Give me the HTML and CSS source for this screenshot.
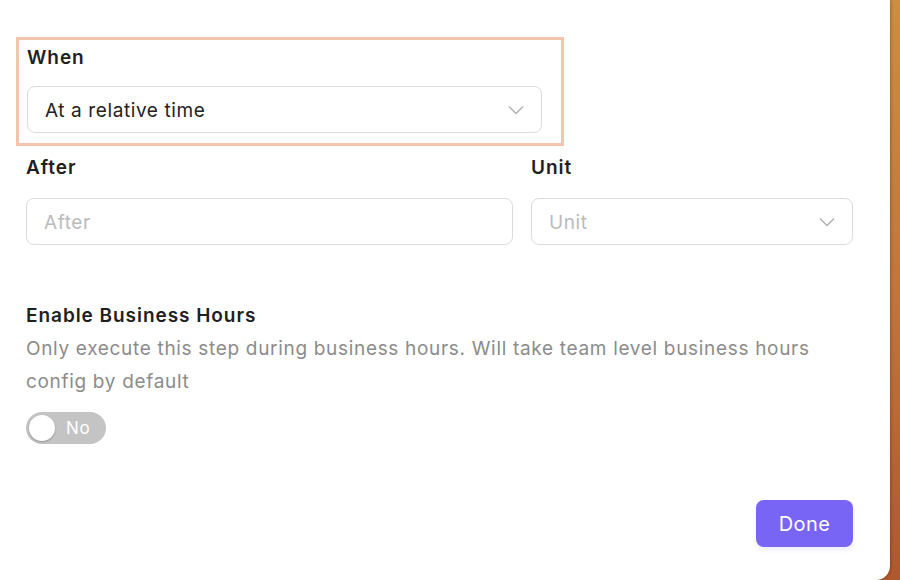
FILE: index.html
```html
<!DOCTYPE html>
<html>
<head>
  <title>Step Settings</title>
  <link rel="stylesheet" href="styles.css">
</head>
<body>
  <div class="panel">
    <div class="highlight">
      <label class="field-label">When</label>
      <div class="select when-select">
        <span class="value">At a relative time</span>
        <svg class="chevron" width="16" height="10" viewBox="0 0 16 10"><path d="M1 1.5 L8 8.5 L15 1.5" fill="none" stroke="#b0b0b0" stroke-width="1.3"/></svg>
      </div>
    </div>

    <div class="row">
      <div class="col">
        <label class="field-label">After</label>
        <div class="input"><span class="placeholder">After</span></div>
      </div>
      <div class="col">
        <label class="field-label">Unit</label>
        <div class="select">
          <span class="placeholder">Unit</span>
          <svg class="chevron" width="16" height="10" viewBox="0 0 16 10"><path d="M1 1.5 L8 8.5 L15 1.5" fill="none" stroke="#b0b0b0" stroke-width="1.3"/></svg>
        </div>
      </div>
    </div>

    <div class="business">
      <div class="field-label">Enable Business Hours</div>
      <p class="desc">Only execute this step during business hours. Will take team level business hours config by default</p>
      <div class="toggle">
        <span class="knob"></span>
        <span class="toggle-text">No</span>
      </div>
    </div>

    <div class="footer">
      <button class="done">Done</button>
    </div>
  </div>
</body>
</html>
```

FILE: styles.css
```css
* { box-sizing: border-box; }
body { margin: 0; height: 580px; overflow: hidden; font-family: Inter, "Noto Sans", sans-serif; letter-spacing: 0.6px; background: linear-gradient(180deg, #cf8d3e 0%, #c47538 50%, #b0582d 100%); }
.panel { width: 890px; height: 580px; background: #fff; border-radius: 0 0 14px 0; padding: 37px 37px 0 26px; box-shadow: 1px 0 3px rgba(0,0,0,0.25); }
.field-label { display: block; font-size: 19px; line-height: 24px; padding-top: 1px; margin-top: -1px; font-weight: 600; color: #1f1f1f; letter-spacing: 0.95px; }
.highlight { margin-left: -10px; width: 548px; border: 3px solid #f4c5ad; padding: 6px 8px 10px 8px; }
.highlight .field-label { margin-bottom: 16px; }
.select, .input { height: 47px; border: 1px solid #dcdcdc; border-radius: 8px; display: flex; align-items: center; justify-content: space-between; padding: 1px 17px 0; font-size: 19px; }
.when-select { width: 515px; }
.value { color: #222; }
.placeholder { color: #bbb; }
.row { display: grid; grid-template-columns: 487px 322px; column-gap: 18px; margin-top: 10px; }
.row .field-label { margin-bottom: 18px; }
.business { margin-top: 59px; }
.desc { margin: 4px 0 0; font-size: 19px; line-height: 33px; color: #8c8c8c; letter-spacing: 0.68px; }
.toggle { margin-top: 14px; width: 80px; height: 32px; border-radius: 16px; background: #c4c4c4; display: flex; align-items: center; padding: 0 3px; }
.knob { width: 26px; height: 26px; border-radius: 50%; background: #fff; box-shadow: 0 1px 2px rgba(0,0,0,0.25); }
.toggle-text { color: #fff; font-size: 17px; margin-left: 11px; }
.footer { display: flex; justify-content: flex-end; margin-top: 56px; }
.done { width: 97px; height: 47px; border: none; border-radius: 8px; background: #7864f5; color: #fff; font-family: Inter, "Noto Sans", sans-serif; font-size: 20px; letter-spacing: 0.4px; box-shadow: 0 3px 4px rgba(120,100,245,0.12); cursor: pointer; }
```
